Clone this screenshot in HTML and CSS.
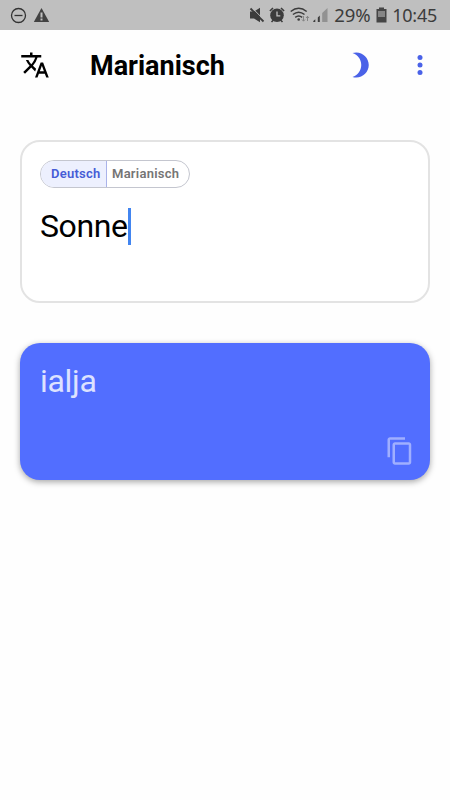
FILE: index.html
```
<!DOCTYPE html>
<html lang="de">

<head>
    <meta charset="UTF-8">
    <meta name="viewport" content="width=device-width, initial-scale=1.0">
    <title>Marianisch</title>
    <link rel="stylesheet" href="styles.css">
</head>

<body>
    <div class="status-bar">
        <div class="status-left">
            <svg width="17" height="17" viewBox="0 0 17 17" fill="none" stroke="#333" stroke-width="1.3">
                <circle cx="8.5" cy="8.5" r="7" />
                <path d="M4.5 8.5h8" />
            </svg>
            <svg width="17" height="16" viewBox="0 0 17 16">
                <path fill="#424242" d="M8.5 1L16.2 15H.8z" />
                <path fill="#c0c0c0" d="M7.5 5.5h2v5h-2zM7.5 11.5h2v2h-2z" />
            </svg>
        </div>
        <div class="status-right">
            <svg class="mute" width="16" height="16" viewBox="0 0 16 16">
                <path fill="#3c3c3c" d="M1 4.5h4L11 .8v14.4L5 11.5H1z" />
                <path stroke="#bfbfbf" stroke-width="1" d="M3.2 1l12 12" />
                <path stroke="#3c3c3c" stroke-width="1.8" d="M1.5 1.5l13 13" />
            </svg>
            <svg class="alarm" width="16" height="16" viewBox="0 0 16 16">
                <circle cx="8" cy="8.2" r="6.8" fill="#3c3c3c" />
                <path stroke="#3c3c3c" stroke-width="1.6" d="M.9 4L4 1M15.1 4L12 1M2.500 15l2-2M13.500 15l-2-2" />
                <path fill="none" stroke="#c0c0c0" stroke-width="1.3" d="M8 4.500v4.300h3.300" />
            </svg>
            <svg class="wifi" width="21" height="16" viewBox="0 0 21 16">
                <g fill="none" stroke="#3c3c3c" stroke-width="1.5">
                    <path d="M.7 4.500q8-6.400 16 0M2.900 7.500q5.800-4.700 11.600 0M5.200 10.300q3.500-2.800 7 0" />
                </g>
                <circle cx="8.7" cy="12.500" r="1.300" fill="#3c3c3c" />
                <path fill="none" stroke="#858585" d="M13.500 9v5M12 12.500l1.500 1.700 1.500-1.700M17.500 14v-5M16 11l1.500-1.700L19 11" />
            </svg>
            <svg class="signal" width="15" height="16" viewBox="0 0 15 16">
                <path fill="#3c3c3c" d="M.3 14l2-1.800V15h-2zM4.800 10.500l2-2V15h-2z" />
                <path fill="#929292" d="M9.200 6l5.300-5v14H9.200z" />
            </svg>
            <span class="percent">29%</span>
            <svg class="battery" width="11" height="16" viewBox="0 0 11 16">
                <path fill="#454545" d="M3 .5h5V2h2.500v13.500H.5V2H3z" />
                <path fill="#858585" d="M2 4h7v6H2z" />
            </svg>
            <span class="clock">10:45</span>
        </div>
    </div>

    <header class="header">
        <svg class="icon" viewBox="0 0 24 24">
            <path d="M12.870 15.070l-2.540-2.510.03-.03A17.520 17.520 0 0 0 14.070 6H17V4h-7V2H8v2H1v1.990h11.170C11.500 7.920 10.440 9.750 9 11.350 8.070 10.320 7.300 9.190 6.690 8h-2c.73 1.630 1.730 3.170 2.980 4.560l-5.090 5.020L4 19l5-5 3.110 3.110.76-2.040zM18.500 10h-2L12 22h2l1.120-3h4.750L21 22h2l-4.500-12zm-2.620 7l1.620-4.330L19.120 17h-3.240z" />
        </svg>
        <h1 class="title">Marianisch</h1>
        <div class="actions">
            <svg class="icon" viewBox="0 0 24 24">
                <path d="M9 2c-1.050 0-2.050.16-3 .46 4.060 1.270 7 5.060 7 9.540 0 4.480-2.940 8.270-7 9.540.95.3 1.950.46 3 .46 5.520 0 10-4.480 10-10S14.520 2 9 2z" />
            </svg>
            <svg class="icon" viewBox="0 0 24 24">
                <circle cx="12" cy="6" r="2" />
                <circle cx="12" cy="12" r="2" />
                <circle cx="12" cy="18" r="2" />
            </svg>
        </div>
    </header>

    <main class="container">
        <div class="card input-card">
            <div class="lang-switch">
                <div class="lang active">Deutsch</div>
                <div class="lang">Marianisch</div>
            </div>
            <div class="source-text">Sonne<span class="cursor"></span></div>
        </div>

        <div class="card result-card">
            <div class="result-text">ialja</div>
            <svg class="icon copy" viewBox="0 0 24 24">
                <path d="M16 1H4c-1.100 0-2 .9-2 2v14h2V3h12V1zm3 4H8c-1.100 0-2 .9-2 2v14c0 1.100.9 2 2 2h11c1.100 0 2-.9 2-2V7c0-1.100-.9-2-2-2zm0 16H8V7h11v14z" />
            </svg>
        </div>
    </main>
</body>

</html>
```

FILE: styles.css
```
* {
    margin: 0;
    padding: 0;
    box-sizing: border-box;
}

body {
    min-height: 100vh;
    background: #fefefe;
    color: #000;
    font-family: Roboto, sans-serif;
}

svg {
    display: block;
    flex: none;
}

/* Status bar */
.status-bar {
    height: 30px;
    padding: 0 13px 0 10px;
    display: flex;
    justify-content: space-between;
    align-items: center;
    background: #bfbfbf;
    color: #3c3c3c;
    font-family: "Noto Sans", sans-serif;
    font-size: 18px;
    line-height: 32px;
}

.status-left,
.status-right {
    display: flex;
    align-items: center;
}

.status-left {
    gap: 6px;
}

.mute {
    margin-right: 4px;
}

.alarm {
    margin-right: 5px;
}

.wifi {
    margin-right: 2px;
}

.signal {
    margin-right: 6px;
}

.percent {
    margin-right: 5px;
    font-size: 18.5px;
}

.battery {
    margin-right: 5.5px;
}

.clock {
    letter-spacing: -0.25px;
}

/* Header */
.header {
    height: 70px;
    padding: 0 15px 0 20px;
    display: flex;
    align-items: center;
}

.icon {
    width: 30px;
    height: 30px;
    fill: #4a62e8;
}

.header > .icon {
    fill: #000;
}

.title {
    margin-left: 40px;
    padding-top: 1px;
    font-size: 27px;
    font-weight: 700;
    line-height: 32px;
}

.actions {
    margin-left: auto;
    display: flex;
    gap: 30px;
}

/* Cards */
.container {
    padding: 40px 20px;
    display: flex;
    flex-direction: column;
    gap: 40px;
}

.card {
    border-radius: 20px;
}

.input-card {
    height: 163px;
    padding: 18px;
    border: 2px solid #e3e3e3;
    background: #fff;
}

.lang-switch {
    width: 150px;
    height: 28px;
    display: flex;
    border: 1px solid #c4c6cf;
    border-radius: 14px;
    overflow: hidden;
    font-size: 13px;
    font-weight: 600;
    letter-spacing: 0.25px;
    line-height: 26px;
}

.lang {
    padding: 0 5px;
    color: #757575;
}

.lang.active {
    width: 66px;
    padding: 0 0 0 10px;
    border-right: 1px solid #aab3ea;
    background: #edf0fe;
    color: #465cd6;
}

.source-text {
    margin-top: 20px;
    display: flex;
    align-items: center;
    font-size: 32px;
    letter-spacing: -0.4px;
    line-height: 37px;
}

.cursor {
    width: 3px;
    height: 37px;
    background: #4285f0;
}

.result-card {
    height: 137px;
    padding: 20px 15px 14px 20px;
    display: flex;
    flex-direction: column;
    justify-content: space-between;
    background: #526eff;
    box-shadow: 0 2px 6px rgba(0, 0, 0, 0.35);
}

.result-text {
    color: #dde2ff;
    font-size: 32px;
    letter-spacing: -0.3px;
    line-height: 37px;
}

.copy {
    align-self: flex-end;
    fill: #a0afff;
}
```
